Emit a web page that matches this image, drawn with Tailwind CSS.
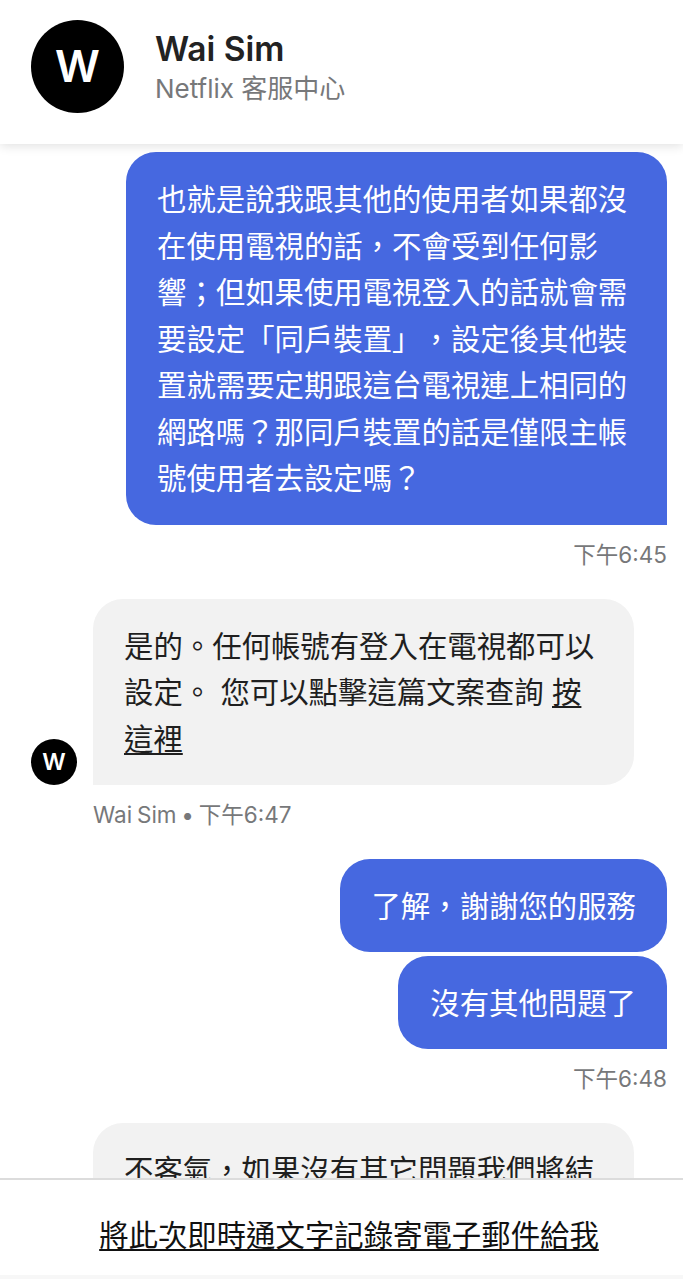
<!DOCTYPE html>
<html lang="zh-Hant">
<head>
    <meta charset="UTF-8">
    <meta name="viewport" content="width=device-width, initial-scale=1.0">
    <title>Netflix 客服中心</title>
    <script src="https://cdn.jsdelivr.net/npm/@tailwindcss/browser@4"></script>
</head>
<body class="bg-white">
<div class="flex flex-col h-[1279px] w-[683px] overflow-hidden font-['Inter','Noto_Sans_CJK_TC',sans-serif] text-[#1f1f1f] [text-spacing-trim:space-all]">

    <!-- Header -->
    <header class="relative z-10 h-[144px] shrink-0 flex items-center gap-[31px] pl-[31px] pb-[12px] bg-white shadow-[0_2px_10px_rgba(0,0,0,0.12)]">
        <div class="w-[93px] h-[93px] rounded-full bg-black text-white flex items-center justify-center text-[44px] font-semibold">W</div>
        <div class="pt-[3px]">
            <div class="text-[33.5px] leading-[40px] font-semibold text-[#222]">Wai Sim</div>
            <div class="mt-[3px] text-[26px] leading-[34px] text-[#77787a]">Netflix 客服中心</div>
        </div>
    </header>

    <!-- Messages -->
    <main class="flex-1 overflow-hidden pt-[8px] pr-[16px] text-[29.4px] leading-[46.5px]">
        <div class="ml-[126px] pl-[31px] pr-[30px] pt-[25px] pb-[22px] bg-[#4668e0] text-white rounded-[30px] rounded-br-none">也就是說我跟其他的使用者如果都沒在使用電視的話，不會受到任何影響；但如果使用電視登入的話就會需要設定「同戶裝置」，設定後其他裝置就需要定期跟這台電視連上相同的網路嗎？那同戶裝置的話是僅限主帳號使用者去設定嗎？</div>
        <div class="mt-[16px] text-right text-[22.5px] leading-[27px] text-[#77787a]">下午6:45</div>

        <div class="mt-[31px] ml-[31px] flex items-end gap-[16px]">
            <div class="w-[46px] h-[46px] rounded-full bg-black text-white flex items-center justify-center text-[23px] font-semibold">W</div>
            <div class="w-[541px] pl-[31px] pr-[30px] pt-[25px] pb-[22px] bg-[#f2f2f2] rounded-[30px] rounded-bl-none">是的。任何帳號有登入在電視都可以設定。 您可以點擊這篇文案查詢 <a class="underline underline-offset-[3px] decoration-2">按這裡</a></div>
        </div>
        <div class="mt-[16px] ml-[93px] text-[22.5px] leading-[27px] text-[#77787a] [word-spacing:-1.5px]">Wai Sim • 下午6:47</div>

        <div class="mt-[31px] flex flex-col items-end gap-[4px]">
            <div class="px-[31px] pt-[25px] pb-[21px] bg-[#4668e0] text-white rounded-[30px]">了解，謝謝您的服務</div>
            <div class="pl-[32px] pr-[31px] pt-[25px] pb-[22px] bg-[#4668e0] text-white rounded-[30px] rounded-br-none">沒有其他問題了</div>
        </div>
        <div class="mt-[16px] text-right text-[22.5px] leading-[27px] text-[#77787a]">下午6:48</div>

        <div class="mt-[31px] ml-[93px] w-[541px] pl-[31px] pr-[30px] pt-[25px] bg-[#f2f2f2] rounded-[30px]">不客氣，如果沒有其它問題我們將結束此次對話</div>
    </main>

    <!-- Footer -->
    <footer class="relative z-10 h-[101px] shrink-0 flex flex-col bg-white border-t-2 border-[#dcdcdc]">
        <div class="flex-1 flex items-center justify-center pl-[15px] pt-[18px]">
            <a class="text-[29.4px] underline underline-offset-[3px] decoration-2 text-[#111]">將此次即時通文字記錄寄電子郵件給我</a>
        </div>
        <div class="h-[4px] bg-[#f7f7f7]"></div>
    </footer>
</div>
</body>
</html>
